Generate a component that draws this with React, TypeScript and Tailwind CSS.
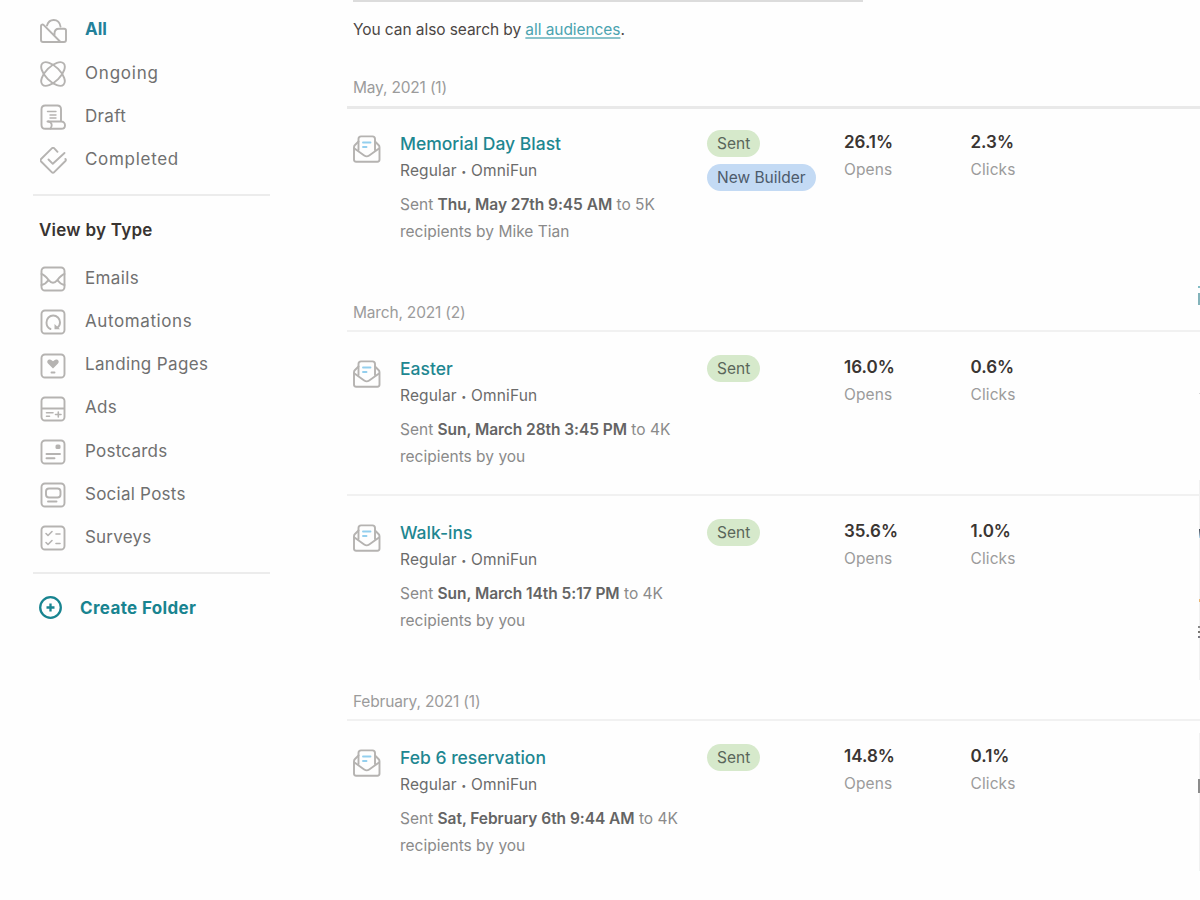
import React from "react";

function Icon({ name }: { name: string }) {
  const box = <rect x="1.5" y="1.5" width="23" height="23" rx="3.5" />;
  const fill = { fill: "#b5b3b1", stroke: "none" };
  const shapes: Record<string, React.ReactNode> = {
    All: (
      <>
        <path d="M7 7.500C8 4 10.500 2 13.700 2c3.500 0 6.300 2.600 6.800 6.500" />
        <path d="M20.500 24H3C1.700 24 1 23.300 1 22V8C1 6.500 2.600 6 3.800 7.200L20.500 24H24c1.400 0 2-.7 2-2v-9.500c0-1.200-.6-1.800-1.800-1.800H19c-2.800 0-4.500 1.800-4.500 4.800v2" />
      </>
    ),
    Ongoing: (
      <>
        <ellipse cx="13" cy="13" rx="15" ry="7.300" transform="rotate(45 13 13)" />
        <ellipse cx="13" cy="13" rx="15" ry="7.300" transform="rotate(-45 13 13)" />
      </>
    ),
    Draft: (
      <>
        <path d="M21 17.500V5.300c0-2.500-1.300-3.800-3.800-3.800H5.300c-2.500 0-3.800 1.300-3.800 3.800V21c0 2.500 1.300 3.800 3.800 3.800h16c2.200 0 3.700-1.600 3.700-3.600s-1.500-3.700-3.700-3.700H7.500" />
        <path d="M8.500 17.500c3 .4 4.500 3.800 2 7" />
        <path d="M7.500 7.500H16M10 11h6M10 14h6" strokeWidth="1.400" />
      </>
    ),
    Completed: (
      <>
        <path d="M17.500 4.800 14.300 1.400c-.7-.8-1.700-.8-2.500 0L1.100 12c-.7.800-.7 1.700 0 2.500l10.600 10.600c.8.800 1.800.8 2.500 0L25.400 14c.7-.8.700-1.300 0-2" />
        <path d="m8.500 12.500 4.300 4.300L24.500 6" />
      </>
    ),
    Emails: (
      <>
        {box}
        <path d="M1.500 8c2 .5 4.500 2.700 7 5.800 3.300 4 5.700 4 9 0 2.500-3.100 5-5.300 7-5.800M1.500 19c3-.5 5-2.200 7-5M24.500 19c-3-.5-5-2.200-7-5" />
      </>
    ),
    Automations: (
      <>
        {box}
        <path d="M10.500 20C8 19 6.500 16.500 6.500 13.500c0-4 3-7 6.700-7s6.800 3 6.800 6.800c0 2.200-1 4.200-2.500 5.200" />
        <path d="M14.500 15v5.200h5.500z" {...fill} />
      </>
    ),
    "Landing Pages": (
      <>
        {box}
        <path d="M13 15.500 8 10.500c-2.200-2.200 1-5.200 3.600-3.300l1.400 1 1.400-1c2.600-1.900 5.800 1.100 3.600 3.300z" {...fill} />
        <path d="M11.500 19.500h3" />
      </>
    ),
    Ads: (
      <>
        {box}
        <path d="M2 12.500h22" />
        <path d="M6.500 16.800h6.500M6.500 20.300H9.500M15.500 18.500h5.500M18.300 16v5" strokeWidth="1.600" />
      </>
    ),
    Postcards: (
      <>
        {box}
        <path d="M6.500 15H20M6.500 19.300H14.500" />
        <rect x="15.500" y="5.500" width="5" height="4.500" rx="1.500" {...fill} />
      </>
    ),
    "Social Posts": (
      <>
        {box}
        <rect x="6" y="6.500" width="14.500" height="9" rx="3" />
        <path d="M8 19.500h8.500" />
      </>
    ),
    Surveys: (
      <>
        {box}
        <path d="m6 8.500 2 2 4-4M16 9H20M6 17.500l2 2 4-4M16 18.500H20" strokeWidth="1.600" />
      </>
    ),
  };
  return (
    <svg className="h-[27px] w-[27px] shrink-0" viewBox="0 0 27 27" fill="none" stroke="#b5b3b1" strokeWidth="1.9" strokeLinecap="round" strokeLinejoin="round">
      {shapes[name]}
    </svg>
  );
}

function EnvelopeIcon() {
  return (
    <svg className="h-[28px] w-[28px] shrink-0" viewBox="0 0 28 28" fill="none" stroke="#b5b3b1" strokeWidth="1.9" strokeLinecap="round" strokeLinejoin="round">
      <path d="M5.500 15V4c0-1.700.9-2.600 2.600-2.600h11.300c1.700 0 2.600.9 2.600 2.600v11" />
      <path d="M5.500 6.500 2 10c-.7.700-1 1.300-1 2.200v12.300C1 26 1.700 26.700 3.100 26.700h21.300c1.400 0 2.100-.7 2.100-2.200V12.200c0-.9-.3-1.500-1-2.200L22 6.500" />
      <path d="M1.500 13.500 11.200 20.500c1.700 1.200 3.300 1.200 5 0l9.800-7" />
      <path d="M10 7.500h7.500M10 12h3.500" stroke="#93cfee" />
    </svg>
  );
}

function NavItem({ label, active, spacing = "tracking-[0.35px]" }: { label: string; active?: boolean; spacing?: string }) {
  return (
    <li className="flex h-[43.2px] items-center gap-[18px] pl-[7px]">
      <Icon name={label} />
      <span className={`mb-[2px] text-[17px] ${active ? "font-bold text-[#23819a]" : `text-[#707070] ${spacing}`}`}>{label}</span>
    </li>
  );
}

type Campaign = { title: string; date: string; size: string; by: string; opens: string; clicks: string; builder?: boolean };

function Stat({ value, label }: { value: string; label: string }) {
  return (
    <div className="w-[126.5px] shrink-0 pt-[22px]">
      <div className="text-[17px] leading-[27px] font-semibold text-[#3a3532]">{value}</div>
      <div className="text-[15.5px] leading-[27px] tracking-[0.1px] text-[#9b9b9b]">{label}</div>
    </div>
  );
}

function CampaignRow({ c }: { c: Campaign }) {
  return (
    <article className="flex pl-[6px]">
      <div className="w-[47px] shrink-0 pt-[28px]">
        <EnvelopeIcon />
      </div>
      <div className="w-[307px] shrink-0 whitespace-nowrap">
        <h3 className="pt-[23px] text-[17.5px] leading-[28px] font-medium text-[#1e8791]">{c.title}</h3>
        <p className="text-[15.5px] leading-[25px] tracking-[0.15px] text-[#6b6b6b]">
          Regular <span className="relative -top-px text-[9px]">•</span> OmniFun
        </p>
        <p className="pt-[6px] text-[15.5px] leading-[27px] text-[#8a8a8a]">
          Sent <b className="font-semibold tracking-[-0.05px] text-[#646464]">{c.date}</b> to {c.size}
          <br />
          recipients by {c.by}
        </p>
      </div>
      <div className="flex w-[137px] shrink-0 flex-col items-start gap-[7px] pt-[23px] text-[15.5px] leading-[27px] text-[#5a665a]">
        <span className="rounded-full bg-[#d6e9cb] px-[10px]">Sent</span>
        {c.builder && <span className="rounded-full bg-[#c3daf4] px-[10px] text-[#4d5b6c]">New Builder</span>}
      </div>
      <Stat value={c.opens} label="Opens" />
      <Stat value={c.clicks} label="Clicks" />
    </article>
  );
}

const may: Campaign = { title: "Memorial Day Blast", date: "Thu, May 27th 9:45 AM", size: "5K", by: "Mike Tian", opens: "26.1%", clicks: "2.3%", builder: true };
const easter: Campaign = { title: "Easter", date: "Sun, March 28th 3:45 PM", size: "4K", by: "you", opens: "16.0%", clicks: "0.6%" };
const walkins: Campaign = { title: "Walk-ins", date: "Sun, March 14th 5:17 PM", size: "4K", by: "you", opens: "35.6%", clicks: "1.0%" };
const feb: Campaign = { title: "Feb 6 reservation", date: "Sat, February 6th 9:44 AM", size: "4K", by: "you", opens: "14.8%", clicks: "0.1%" };

function GroupTitle({ children }: { children: React.ReactNode }) {
  return <h2 className="h-[30px] pl-[6px] text-[15.5px] leading-[26px] tracking-[-0.18px] text-[#9b9b9b]">{children}</h2>;
}

/* Slivers of the neighbouring panel that show at the window's right edge. */
function EdgePanel() {
  return (
    <div className="absolute top-0 right-0 h-full w-[2px]">
      <div className="absolute top-[480px] right-0 h-[200px] w-px bg-[#f1f1f1]" />
      <div className="absolute top-[733px] right-0 h-[138px] w-px bg-[#f1f1f1]" />
      <div className="absolute top-[286px] right-0 h-[2px] w-[2px] bg-[#83bcc4]" />
      <div className="absolute top-[293px] right-0 h-[12px] w-[2px] bg-[#83b3ba]" />
      <div className="absolute top-[393px] right-0 h-px w-px bg-[#d8d8d8]" />
      <div className="absolute top-[529px] right-0 h-[9px] w-px bg-linear-to-b from-[#40444f] to-[#b9dff5]" />
      <div className="absolute top-[599px] right-0 h-[3px] w-px bg-[#e9b673]" />
      <div className="absolute top-[626px] right-0 h-[2px] w-[2px] bg-[#888888]" />
      <div className="absolute top-[631px] right-0 h-[2px] w-[2px] bg-[#77756f]" />
      <div className="absolute top-[636px] right-0 h-[2px] w-[2px] bg-[#77777f]" />
      <div className="absolute top-[779px] right-0 h-[14px] w-[2px] bg-[#8b8b8b]" />
    </div>
  );
}

export default function App() {
  return (
    <div className="relative flex h-[900px] w-[1200px] overflow-hidden bg-[#fefefe] font-['Inter','Liberation_Sans',sans-serif]">
      <aside className="w-[347px] shrink-0 pt-[9.6px] pl-[33px]">
        <ul>
          <NavItem label="All" active />
          <NavItem label="Ongoing" spacing="tracking-[0.8px]" />
          <NavItem label="Draft" />
          <NavItem label="Completed" spacing="tracking-[0.7px]" />
        </ul>
        <div className="mt-[11.4px] h-[2px] w-[237px] bg-[#ececec]" />
        <h2 className="mt-[20px] mb-[14.3px] pl-[6px] text-[17px] leading-[28px] font-semibold tracking-[0.25px] text-[#393431]">View by Type</h2>
        <ul>
          <NavItem label="Emails" />
          <NavItem label="Automations" spacing="tracking-[0.6px]" />
          <NavItem label="Landing Pages" />
          <NavItem label="Ads" />
          <NavItem label="Postcards" spacing="tracking-[0.25px]" />
          <NavItem label="Social Posts" spacing="tracking-[0.25px]" />
          <NavItem label="Surveys" spacing="tracking-[0.2px]" />
        </ul>
        <div className="mt-[11.7px] h-[2px] w-[237px] bg-[#ececec]" />
        <div className="mt-[21px] flex h-[28px] items-center gap-[17px] pl-[5px] text-[17px] font-bold tracking-[0.35px] text-[#188490]">
          <svg className="mb-[4px] h-[25px] w-[25px]" viewBox="0 0 25 25" fill="none" stroke="#188490" strokeWidth="2.3">
            <circle cx="12.5" cy="12.5" r="10.3" />
            <path d="M12.500 8.500v8M8.500 12.500h8" />
          </svg>
          <span>Create Folder</span>
        </div>
      </aside>

      <main className="flex w-[853px] shrink-0 flex-col">
        <div className="ml-[6px] h-[2px] w-[510px] bg-[#dcdcdc]" />
        <p className="h-[73px] pt-[15px] pl-[6px] text-[15.5px] leading-[26px] tracking-[-0.07px] text-[#4b4644]">
          You can also search by <a className="text-[#4aa3b0] underline decoration-[#8ac3cb] decoration-2 underline-offset-[2px]">all audiences</a>.
        </p>
        <GroupTitle>May, 2021 (1)</GroupTitle>
        <section className="mt-px h-[194px] border-t-[3px] border-[#e9e9e9]">
          <div className="-mt-[2px]">
            <CampaignRow c={may} />
          </div>
        </section>
        <GroupTitle>March, 2021 (2)</GroupTitle>
        <section className="h-[164px] border-t-[2px] border-[#f1f1f1]">
          <CampaignRow c={easter} />
        </section>
        <section className="h-[195px] border-t-[2px] border-[#f1f1f1]">
          <CampaignRow c={walkins} />
        </section>
        <GroupTitle>February, 2021 (1)</GroupTitle>
        <section className="border-t-[2px] border-[#f1f1f1]">
          <CampaignRow c={feb} />
        </section>
      </main>
      <EdgePanel />
    </div>
  );
}
